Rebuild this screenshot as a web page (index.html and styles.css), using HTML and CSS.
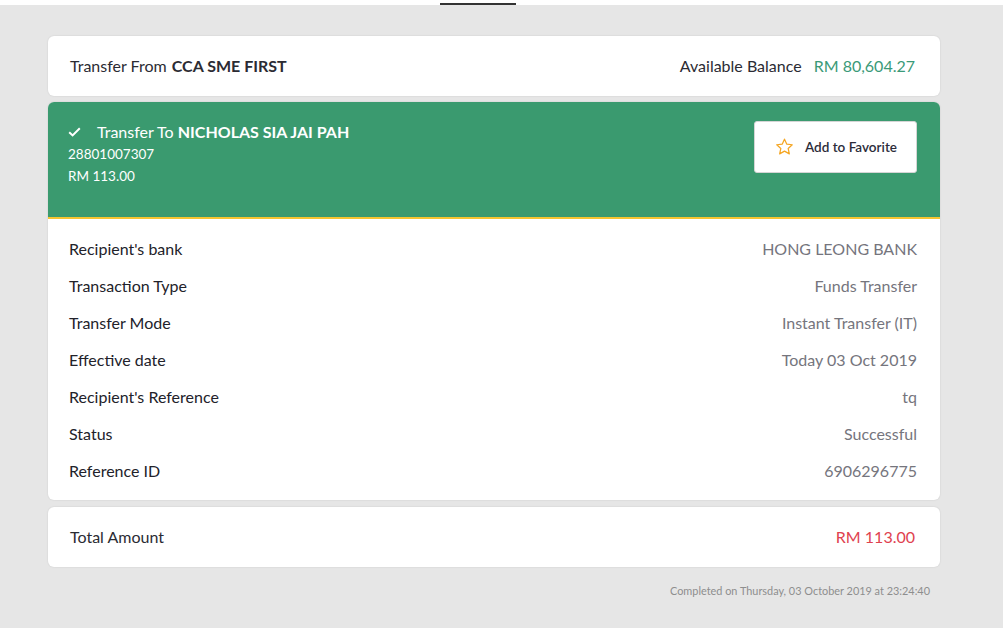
FILE: index.html
```html
<!DOCTYPE html>
<html>
<head>
<meta charset="utf-8">
<link rel="stylesheet" href="styles.css">
</head>
<body>
<div class="topbar"><span class="tab-indicator"></span></div>
<main class="page">
  <section class="card from-card">
    <div class="from"><span class="muted-label">Transfer From</span> <strong>CCA SME FIRST</strong></div>
    <div class="balance"><span>Available Balance</span><span class="balance-amt">RM 80,604.27</span></div>
  </section>

  <section class="card detail-card">
    <div class="hero">
      <div class="hero-info">
        <div class="hero-title">
          <svg class="check" width="13" height="10" viewBox="0 0 13 10"><path d="M1.2 5.2 L4.6 8.4 L11.8 1.2" fill="none" stroke="#fff" stroke-width="2"/></svg>
          <span>Transfer To <strong>NICHOLAS SIA JAI PAH</strong></span>
        </div>
        <div class="hero-line">28801007307</div>
        <div class="hero-line">RM 113.00</div>
      </div>
      <button class="fav-btn">
        <svg width="21" height="20" viewBox="0 0 24 24"><path d="M12 2.6 L14.8 8.6 L21.3 9.3 L16.4 13.7 L17.8 20.2 L12 16.9 L6.2 20.2 L7.6 13.7 L2.7 9.3 L9.2 8.6 Z" fill="none" stroke="#f5a623" stroke-width="1.5" stroke-linejoin="round"/></svg>
        <span>Add to Favorite</span>
      </button>
    </div>
    <div class="rows">
      <div class="row"><span>Recipient's bank</span><span class="val">HONG LEONG BANK</span></div>
      <div class="row"><span>Transaction Type</span><span class="val">Funds Transfer</span></div>
      <div class="row"><span>Transfer Mode</span><span class="val">Instant Transfer (IT)</span></div>
      <div class="row"><span>Effective date</span><span class="val">Today 03 Oct 2019</span></div>
      <div class="row"><span>Recipient's Reference</span><span class="val">tq</span></div>
      <div class="row"><span>Status</span><span class="val">Successful</span></div>
      <div class="row"><span>Reference ID</span><span class="val">6906296775</span></div>
    </div>
  </section>

  <section class="card total-card">
    <span>Total Amount</span>
    <span class="total-amt">RM 113.00</span>
  </section>

  <p class="completed">Completed on Thursday, 03 October 2019 at 23:24:40</p>
</main>
</body>
</html>
```

FILE: styles.css
```css
* { box-sizing: border-box; }
html, body { margin: 0; padding: 0; }
body {
  font-family: Lato, "Open Sans", Arial, sans-serif;
  color: #2b2b33;
  background: #e6e6e6;
  width: 1003px;
  height: 628px;
  overflow: hidden;
}
.topbar {
  height: 5px;
  background: #fff;
  display: flex;
  align-items: flex-end;
  padding-left: 440px;
}
.tab-indicator {
  display: block;
  width: 76px;
  height: 2px;
  background: #333;
}
.page {
  padding: 31px 63px 0 48px;
  display: flex;
  flex-direction: column;
}
.card {
  background: #fff;
  border-radius: 6px;
  box-shadow: 0 0 2px rgba(0,0,0,0.12);
}
.from-card {
  height: 60px;
  display: flex;
  justify-content: space-between;
  align-items: center;
  padding: 0 25px 2px 22px;
  font-size: 16px;
}
.from strong { font-weight: 700; margin-left: 1px; }
.balance { display: flex; gap: 12px; }
.balance-amt { color: #3a9a78; }

.detail-card {
  margin-top: 6px;
  overflow: hidden;
}
.hero {
  background: #3a9a6f;
  border-bottom: 2px solid #f5c531;
  height: 117px;
  display: flex;
  justify-content: space-between;
  align-items: flex-start;
  padding: 19px 23px 0 20px;
  color: #fff;
}
.hero-title {
  font-size: 16px;
  line-height: 22px;
  display: flex;
  align-items: center;
}
.hero-title strong { font-weight: 700; }
.check { margin: 0 16px 0 0; }
.hero-line {
  font-size: 13.5px;
  line-height: 22px;
}
.fav-btn {
  width: 163px;
  height: 52px;
  background: #fff;
  border: 1px solid #d5d5d5;
  border-radius: 3px;
  display: flex;
  align-items: center;
  padding: 0 0 0 19px;
  gap: 10px;
  font-family: inherit;
  font-size: 13.5px;
  font-weight: 600;
  color: #2c2c3a;
}
.rows {
  padding: 11px 23px 11px 21px;
}
.row {
  height: 37px;
  display: flex;
  justify-content: space-between;
  align-items: center;
  font-size: 16px;
  color: #22222a;
}
.row .val { color: #75757d; }

.total-card {
  margin-top: 7px;
  height: 60px;
  display: flex;
  justify-content: space-between;
  align-items: center;
  padding: 0 25px 2px 22px;
  font-size: 16px;
}
.total-amt { color: #e0424f; }

.completed {
  margin: 17px 10px 0 0;
  text-align: right;
  font-size: 10.9px;
  color: #8e8e8e;
}
```
